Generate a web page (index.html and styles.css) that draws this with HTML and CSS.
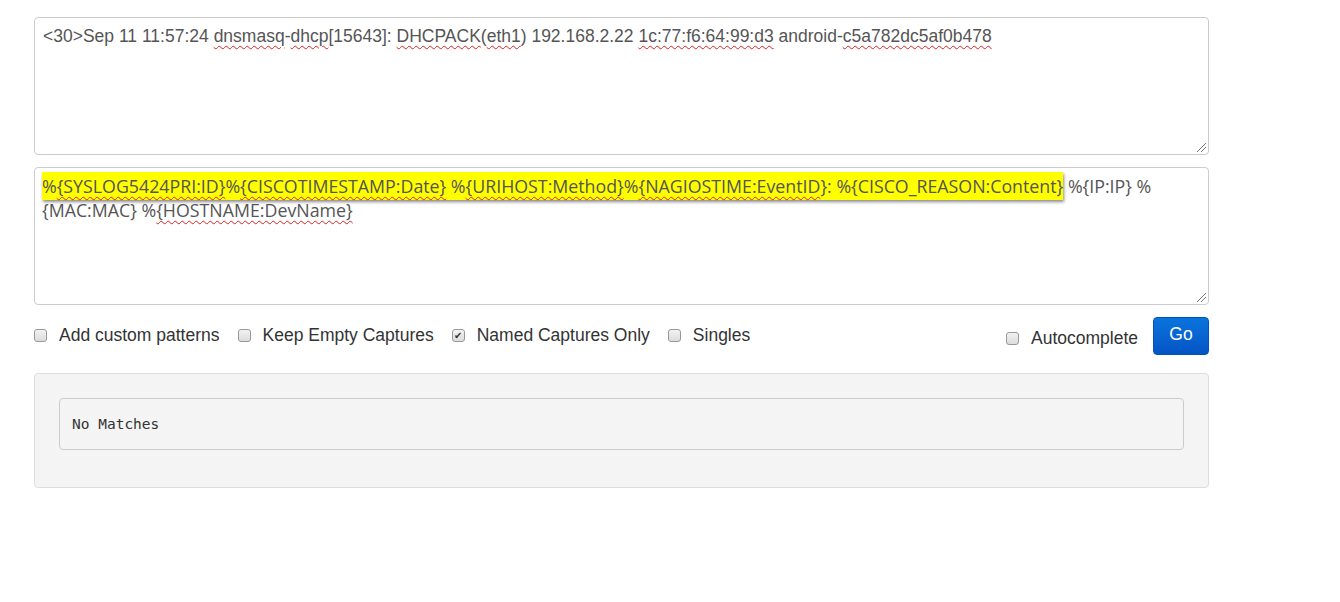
FILE: index.html
```html
<!DOCTYPE html>
<html>
  <head>
    <title>Grok Debugger</title>
    <link rel="stylesheet" href="styles.css">
  </head>
  <body>
    <div class="container">
      <div class="input-box sample">
        &lt;30&gt;Sep 11 11:57:24 <span class="sp">dnsmasq</span>-<span class="sp">dhcp</span>[15643]: <span class="sp">DHCPACK</span>(<span class="sp">eth1</span>) 192.168.2.22 <span class="sp">1c:77:f6:64:99:d3</span> android-<span class="sp">c5a782dc5af0b478</span>
        <span class="grip"></span>
      </div>

      <div class="input-box pattern">
        <span class="hl">%<span class="sp">{SYSLOG5424PRI:ID}</span>%<span class="sp">{CISCOTIMESTAMP:Date}</span> %<span class="sp">{URIHOST:Method}</span>%<span class="sp">{NAGIOSTIME:EventID</span>}: %{CISCO_REASON:Content}</span> %{IP:IP} %<br>{MAC:MAC} %<span class="sp">{HOSTNAME:DevName}</span>
        <span class="grip"></span>
      </div>

      <div class="options">
        <label class="opt"><span class="box"></span>Add custom patterns</label>
        <label class="opt"><span class="box"></span>Keep Empty Captures</label>
        <label class="opt"><span class="box checked">&#10004;</span>Named Captures Only</label>
        <label class="opt"><span class="box"></span>Singles</label>
        <div class="spacer"></div>
        <label class="opt auto"><span class="box"></span>Autocomplete</label>
        <button class="go">Go</button>
      </div>

      <div class="results">
        <pre class="output">No Matches</pre>
      </div>
    </div>
  </body>
</html>
```

FILE: styles.css
```css
body {
  margin: 0;
  background: #fff;
  font-family: "Liberation Sans", Arial, sans-serif;
  color: #333;
}

.container {
  width: 1175px;
  margin-left: 34px;
  padding-top: 17px;
}

.input-box {
  position: relative;
  box-sizing: border-box;
  height: 138px;
  border: 1px solid #ccc;
  border-radius: 4px;
  background: #fff;
  color: #555;
  margin-bottom: 12px;
}

.sample {
  font-size: 17.5px;
  line-height: 24px;
  padding: 6px 8px;
}

.pattern {
  font-family: "Open Sans", "DejaVu Sans", sans-serif;
  font-size: 17.8px;
  line-height: 24px;
  padding: 6px 7px;
  white-space: nowrap;
}

.sp {
  text-decoration: underline wavy #e02020;
  text-decoration-thickness: 1px;
  text-underline-offset: 3px;
}

.hl {
  background: #ffff00;
  color: #555;
  padding: 2px 0;
  box-shadow: 1px 2px 3px rgba(0, 0, 0, 0.45);
}

.grip {
  position: absolute;
  right: 2px;
  bottom: 2px;
  width: 9px;
  height: 9px;
  background: linear-gradient(135deg, transparent 45%, #777 45%, #777 52%, transparent 52%, transparent 70%, #777 70%, #777 77%, transparent 77%);
}

.options {
  display: flex;
  align-items: center;
  height: 38px;
  margin-top: -1px;
  margin-bottom: 19px;
  font-size: 17.5px;
  color: #333;
}

.opt {
  display: flex;
  align-items: center;
  margin-right: 18px;
}

.opt.auto {
  margin-right: 15px;
  margin-top: 6px;
}

.box {
  box-sizing: border-box;
  width: 13px;
  height: 13px;
  border: 1px solid #999;
  border-radius: 3px;
  background: linear-gradient(#f2f2f2, #dcdcdc);
  margin: 0 12px 0 0;
  font-size: 10px;
  line-height: 11px;
  text-align: center;
  color: #333;
}

.spacer {
  flex: 1;
}

.go {
  width: 56px;
  height: 38px;
  margin-top: 2px;
  border: 1px solid #0052b8;
  border-radius: 4px;
  background: linear-gradient(#0a74dd, #0454c4);
  color: #fff;
  font-family: "Liberation Sans", Arial, sans-serif;
  font-size: 17.5px;
  padding: 0 0 4px;
}

.results {
  box-sizing: border-box;
  height: 115px;
  background: #f4f4f4;
  border: 1px solid #ddd;
  border-radius: 4px;
  padding: 24px;
}

.output {
  margin: 0;
  box-sizing: border-box;
  height: 52px;
  border: 1px solid #ccc;
  border-radius: 4px;
  background: #f4f4f4;
  padding: 16px 12px;
  font-family: "DejaVu Sans Mono", "Liberation Mono", monospace;
  font-size: 14.5px;
  line-height: 18px;
  color: #333;
}
```
